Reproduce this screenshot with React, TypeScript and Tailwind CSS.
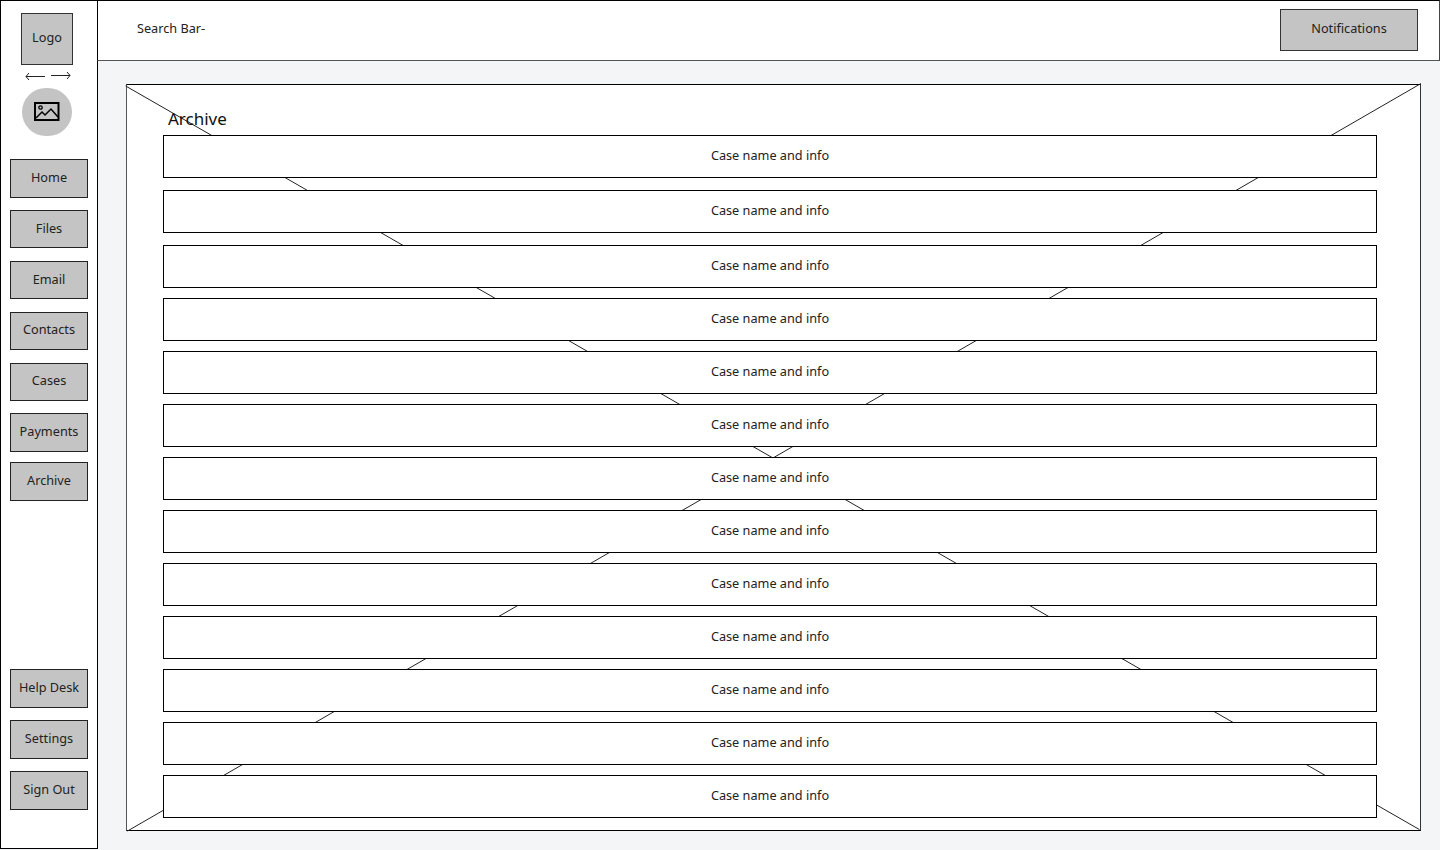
const TOP_NAV = ["Home", "Files", "Email", "Contacts", "Cases", "Payments"];
const BOTTOM_NAV = ["Help Desk", "Settings", "Sign Out"];
const ROW_GAPS = ["mt-0", "mt-3", "mt-3", "mt-2.5", "mt-2.5", "mt-2.5", "mt-2.5", "mt-2.5", "mt-2.5", "mt-2.5", "mt-2.5", "mt-2.5", "mt-2.5"];

function NavButton({ label, className = "" }: { label: string; className?: string }) {
  return (
    <button className={`flex h-[38.6px] w-[78px] items-center justify-center border border-[#222] bg-[#c4c4c4] pb-0.5 text-[12.7px] text-[#222] ${className}`}>
      {label}
    </button>
  );
}

function Arrows() {
  return (
    <svg width="46" height="10" viewBox="0 0 46 10" fill="none" stroke="#222" strokeWidth="1" className="mt-1.5">
      <path d="M20 5.5H1M1 5.5l3-3.5M1 5.5l3 3.5" />
      <path d="M26 4.5h19M45 4.5l-3-3.5M45 4.5l-3 3.5" />
    </svg>
  );
}

function PictureIcon() {
  return (
    <svg width="26" height="20" viewBox="0 0 26 20" fill="none" stroke="#000">
      <rect x="1" y="1" width="23.5" height="17" strokeWidth="2" />
      <circle cx="6.5" cy="5.5" r="1.7" strokeWidth="1.3" />
      <path d="M2 16l6-6 3 3 6-6 7 8" strokeWidth="1.5" />
    </svg>
  );
}

function Sidebar() {
  return (
    <aside className="flex h-[849px] w-[98px] shrink-0 flex-col border border-black bg-white pl-[9px]">
      <div className="ml-[11px] mt-3 flex h-[52px] w-[52px] items-center justify-center border border-[#333] bg-[#c4c4c4] pb-0.5 text-[12.7px] text-[#222]">
        Logo
      </div>
      <div className="ml-[15px]">
        <Arrows />
      </div>
      <div className="ml-3 mt-[7px] flex h-[48px] w-[50px] items-center justify-center rounded-full bg-[#c4c4c4]">
        <PictureIcon />
      </div>
      <div className="mt-[23px] flex flex-col gap-[12.3px]">
        {TOP_NAV.map((label) => (
          <NavButton key={label} label={label} />
        ))}
      </div>
      <NavButton label="Archive" className="mt-[10.1px]" />
      <div className="mt-auto mb-[38.4px] flex flex-col gap-[12.3px]">
        {BOTTOM_NAV.map((label) => (
          <NavButton key={label} label={label} />
        ))}
      </div>
    </aside>
  );
}

export default function App() {
  return (
    <div className="flex h-[850px] w-[1440px] overflow-hidden bg-[#f4f5f7] font-['Noto_Sans',sans-serif]">
      <Sidebar />
      <div className="flex min-w-0 flex-1 flex-col">
        <header className="-ml-px flex h-[61px] items-center justify-between border border-t-black border-r-[#444] border-b-[#555] border-l-black bg-white pl-[39px] pr-[21px]">
          <span className="pb-[3px] text-[12.7px] text-[#222]">Search Bar-</span>
          <button className="mb-0.5 flex h-[42px] w-[138px] items-center justify-center border border-[#333] bg-[#c4c4c4] pb-0.5 text-[12.7px] text-[#222]">
            Notifications
          </button>
        </header>
        <main className="pl-7 pr-5 pt-[23px]">
          <section className="relative h-[747px] w-[1295px] border border-t-black border-r-[#333] border-b-black border-l-[#555] bg-white pl-9">
            {/* placeholder cross behind the rows */}
            <svg className="absolute -left-px -top-px overflow-visible" width="1295" height="747" viewBox="0 0 1295 747" fill="none" stroke="#222" strokeWidth="1">
              <path d="M-0.3 2L1293.5 745.6" />
              <path d="M1295 -0.5L1.5 747" />
            </svg>
            <h1 className="relative ml-[5px] mt-5 h-[30px] text-[17px] leading-7 text-[#111]">Archive</h1>
            <div className="relative flex flex-col">
              {ROW_GAPS.map((gap, i) => (
                <div
                  key={i}
                  className={`flex h-[43px] w-[1214px] items-center justify-center border border-black bg-white pb-px text-[12.7px] text-[#222] ${gap}`}
                >
                  Case name and info
                </div>
              ))}
            </div>
          </section>
        </main>
      </div>
    </div>
  );
}
